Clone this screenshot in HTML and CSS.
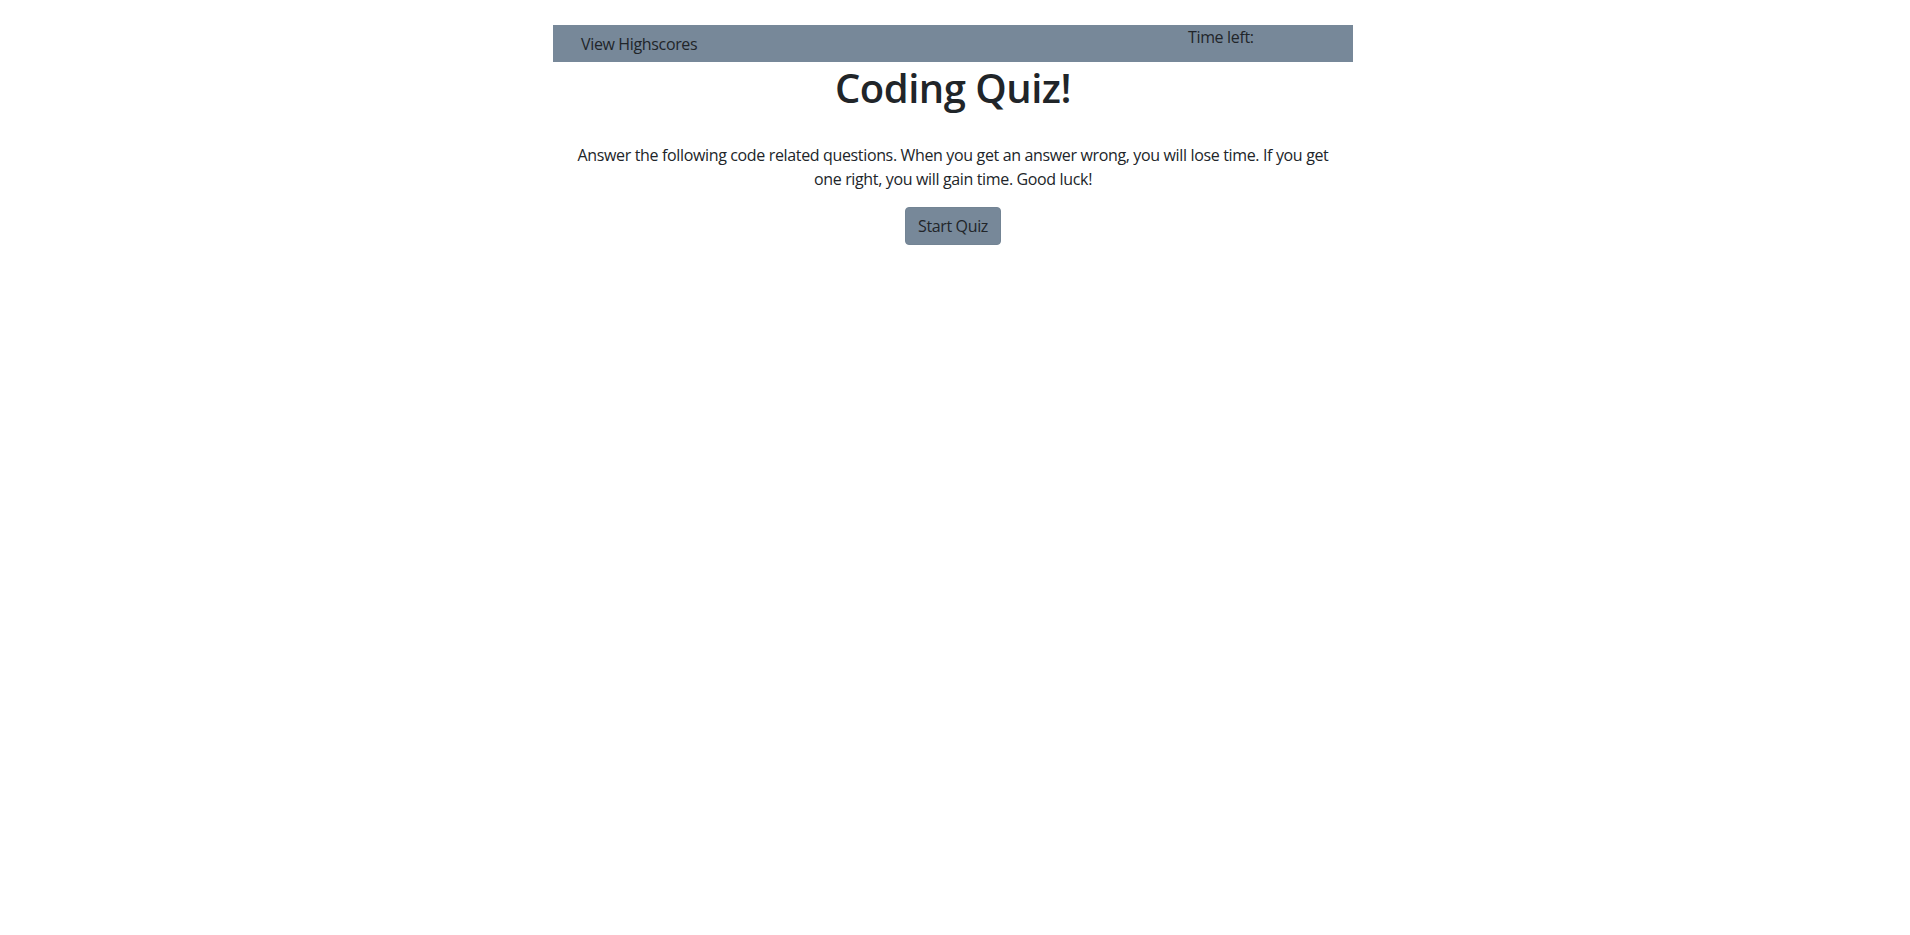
FILE: index.html
```html
<!DOCTYPE html>
<html lang="en">
<head>
<meta charset="utf-8">
<title>Coding Quiz</title>
<link rel="stylesheet" href="styles.css">
</head>
<body>
<div class="container">
  <header class="topbar">
    <a class="highscores" href="#">View Highscores</a>
    <div class="timer">Time left: <span class="time"></span></div>
  </header>
  <main class="intro">
    <h1 class="title">Coding Quiz!</h1>
    <p class="desc">Answer the following code related questions. When you get an answer wrong, you will lose time. If you get one right, you will gain time. Good luck!</p>
    <button class="start-btn" type="button">Start Quiz</button>
  </main>
</div>
</body>
</html>
```
FILE: styles.css
```css
html, body {
  margin: 0;
  padding: 0;
  background: #ffffff;
}
body {
  font-family: "Open Sans", "Noto Sans", "Liberation Sans", sans-serif;
  font-size: 16px;
  line-height: 24px;
  letter-spacing: -0.35px;
  color: #212529;
}
.container {
  width: 800px;
  margin: 25px 0 0 calc((100% - 800px) / 2 - 2px);
}
.topbar {
  display: flex;
  justify-content: space-between;
  align-items: flex-start;
  height: 37px;
  background: #778899;
  padding-left: 28px;
  box-sizing: border-box;
}
.highscores {
  color: #212529;
  text-decoration: none;
  padding-top: 7px;
}
.timer {
  width: 165px;
  padding-top: 0;
}
.intro {
  display: flex;
  flex-direction: column;
  align-items: center;
  text-align: center;
  padding: 0 22px;
}
.title {
  margin: 2px 0 0;
  font-size: 40px;
  line-height: 48px;
  font-weight: 600;
  letter-spacing: -0.5px;
}
.desc {
  margin: 31px 0 16px;
}
.start-btn {
  font-family: inherit;
  font-size: 16px;
  line-height: 24px;
  letter-spacing: -0.35px;
  color: #212529;
  background: #778899;
  border: 1px solid #738494;
  border-radius: 4px;
  padding: 6px 12px;
  cursor: pointer;
}
```
